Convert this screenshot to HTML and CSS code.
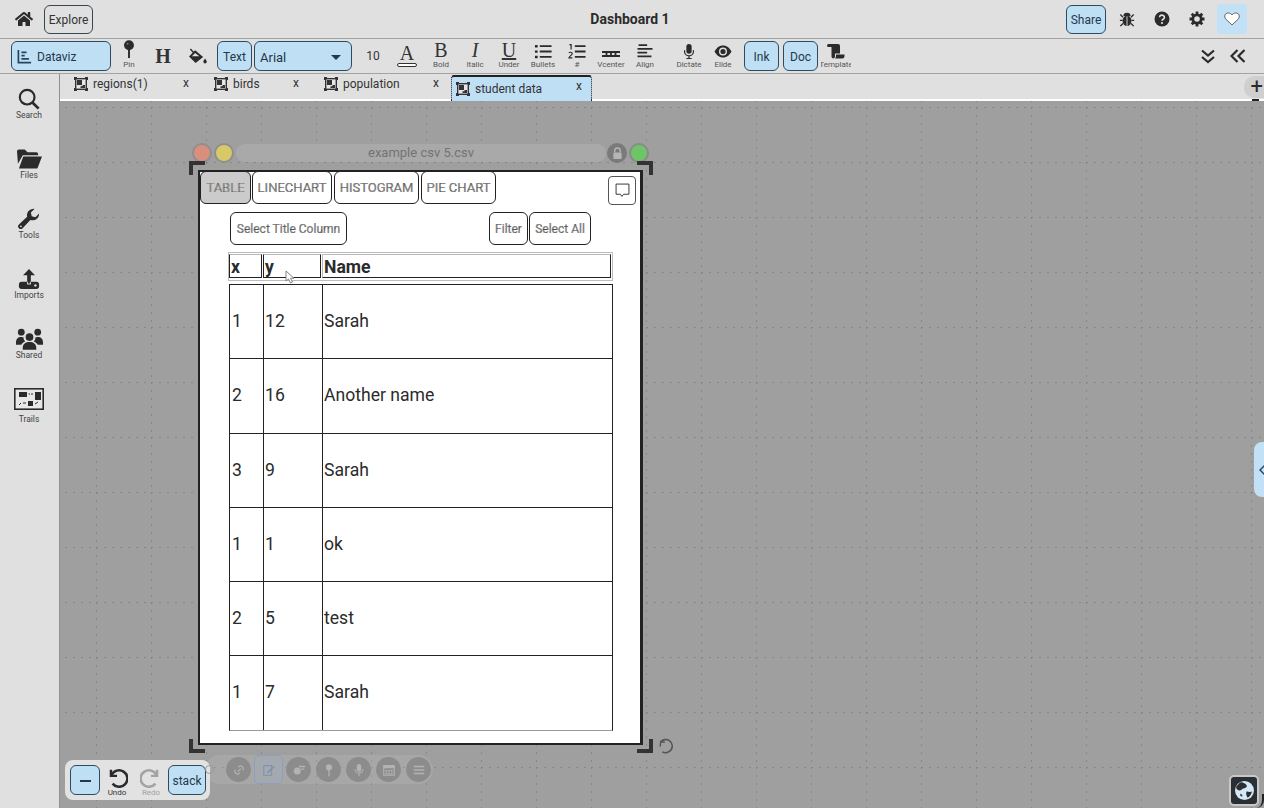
FILE: index.html
```html
<!DOCTYPE html>
<html lang="en">
<head>
<meta charset="utf-8">
<title>Dashboard 1</title>
<link rel="stylesheet" href="styles.css">
</head>
<body>
<svg class="defs" width="0" height="0" aria-hidden="true">
  <defs>
    <symbol id="doc-icon" viewBox="0 0 14 14">
      <path d="M0 0h3v1h8V0h3v3h-1v8h1v3h-3v-1H3v1H0v-3h1V3H0z" fill="#333"/>
      <rect x="2.4" y="2.4" width="9.2" height="9.2" fill="#e6e6e6"/>
      <path d="M3 3h5v5H3zM8.500 8h2.500v3H6.500V9.200h2z" fill="#333"/>
    </symbol>
  </defs>
</svg>
<div class="app">
  <header class="topbar">
    <div class="top-left">
      <svg class="home" viewBox="0 0 576 512"><path d="M280.37 148.26L96 300.11V464a16 16 0 0 0 16 16l112.06-.29a16 16 0 0 0 15.92-16V368a16 16 0 0 1 16-16h64a16 16 0 0 1 16 16v95.64a16 16 0 0 0 16 16.05L464 480a16 16 0 0 0 16-16V300L295.67 148.26a12.19 12.19 0 0 0-15.3 0zM571.6 251.47L488 182.56V44.05a12 12 0 0 0-12-12h-56a12 12 0 0 0-12 12v72.61L318.47 43a48 48 0 0 0-61 0L4.34 251.47a12 12 0 0 0-1.6 16.9l25.5 31A12 12 0 0 0 45.15 301l235.22-193.74a12.19 12.19 0 0 1 15.3 0L530.9 301a12 12 0 0 0 16.9-1.6l25.5-31a12 12 0 0 0-1.7-16.93z" fill="#2b2b2b"/></svg>
      <button class="btn explore">Explore</button>
    </div>
    <div class="title">Dashboard 1</div>
    <div class="top-right">
      <button class="btn active share">Share</button>
      <svg class="top-icon" viewBox="0 0 18 18"><g fill="#2b2b2b"><ellipse cx="9" cy="11" rx="5" ry="6"/><path d="M5 5.500a4 3.500 0 0 1 8 0z"/></g><path d="M1.500 4l3 3M16.500 4l-3 3M1 10.500h3M17 10.500h-3M1.500 17l3-3M16.500 17l-3-3" stroke="#2b2b2b" stroke-width="1.500" fill="none"/><path d="M9 6v11" stroke="#e0e0e0" stroke-width="1"/></svg>
      <svg class="top-icon" viewBox="0 0 16 16"><circle cx="8" cy="8" r="7.500" fill="#2b2b2b"/><path d="M5.600 6.200a2.400 2.200 0 1 1 3.600 2c-.8.500-1.200.8-1.200 1.600" fill="none" stroke="#e0e0e0" stroke-width="1.700"/><circle cx="8" cy="12" r="1.100" fill="#e0e0e0"/></svg>
      <svg class="top-icon" viewBox="0 0 16 16"><circle cx="8" cy="8" r="4.200" fill="none" stroke="#2b2b2b" stroke-width="2.800"/><path d="M8 .5v3M8 12.500v3M.5 8h3M12.500 8h3M2.700 2.700l2.100 2.100M11.200 11.200l2.100 2.100M13.300 2.700l-2.100 2.100M4.800 11.200l-2.100 2.100" stroke="#2b2b2b" stroke-width="2.800"/></svg>
      <div class="heart-box"><svg class="heart" viewBox="0 0 16 14"><path d="M8 13L2 7.200C-.6 4.500 1 1 4.200 1 6 1 7.300 2 8 3c.7-1 2-2 3.800-2C15 1 16.600 4.500 14 7.200z" fill="#fff" stroke="#2b2b2b" stroke-width=".7"/></svg></div>
    </div>
  </header>

  <div class="toolbar">
    <button class="btn active dataviz">
      <svg class="dv-icon" viewBox="0 0 16 16"><path d="M1.500 1v13.500H15M4.700 3.500h5.500M4.700 7h3.500M4.700 10.500h8" fill="none" stroke="#24445f" stroke-width="1.800"/></svg>
      Dataviz
    </button>
    <div class="tool"><svg class="ti ti-pin" viewBox="0 0 12 20"><circle cx="6" cy="5.500" r="5.200" fill="#2b2b2b"/><circle cx="4.500" cy="4" r="1" fill="#777"/><rect x="5" y="10" width="2" height="9" fill="#2b2b2b"/></svg><span class="tl">Pin</span></div>
    <div class="tool tool-plain"><span class="h-glyph">H</span></div>
    <div class="tool tool-plain"><svg class="ti-bucket" viewBox="0 0 20 18"><path d="M2.500 1l3.500 4" stroke="#2b2b2b" stroke-width="1.500" fill="none"/><path d="M7.500 2.500L1 9l7 7 8-6.500zM7.500 5.200L4 8.800h8z" fill="#2b2b2b" fill-rule="evenodd"/><path d="M18 11c1 1.500 1.800 2.400 1.800 3.500a1.800 1.800 0 0 1-3.600 0c0-1.100.8-2 1.800-3.500z" fill="#2b2b2b"/></svg></div>
    <button class="btn active text-btn">Text</button>
    <div class="select"><span>Arial</span><i class="caret"></i></div>
    <div class="tool tool-plain size">10</div>
    <div class="tool tool-plain"><span class="a-glyph">A</span><i class="a-bar"></i></div>
    <div class="tool"><span class="glyph g-b">B</span><span class="tl">Bold</span></div>
    <div class="tool"><span class="glyph g-i">I</span><span class="tl">Italic</span></div>
    <div class="tool"><span class="glyph g-u">U</span><span class="tl">Under</span></div>
    <div class="tool"><svg class="ti" viewBox="0 0 16 14"><path d="M5 2h11M5 7h11M5 12h11" stroke="#2b2b2b" stroke-width="1.800"/><path d="M.5 1h2.500v2.200H.5zM.5 6h2.500v2.200H.5zM.5 11h2.500v2.200H.5z" fill="#2b2b2b"/></svg><span class="tl">Bullets</span></div>
    <div class="tool"><svg class="ti" viewBox="0 0 16 14"><path d="M6 2h10M6 7h10M6 12h10" stroke="#2b2b2b" stroke-width="1.800"/><path d="M1 .8l1.500-.6v5M.5 8.500c.6-1.200 3-1 3 .5 0 1-2.500 2.200-3 4h3.200" fill="none" stroke="#2b2b2b" stroke-width="1.100"/></svg><span class="tl">#</span></div>
    <div class="tool"><svg class="ti" viewBox="0 0 20 14"><path d="M0 6.500h20v2.200H0zM0 11h20v2.200H0z" fill="#2b2b2b"/><path d="M4 8h2v4H4zM9 8h2v4H9zM14 8h2v4h-2z" fill="#2b2b2b"/></svg><span class="tl">Vcenter</span></div>
    <div class="tool"><svg class="ti" viewBox="0 0 16 14"><path d="M2 1h8M1 4.500h14M1 8h9M1 11.500h13" stroke="#2b2b2b" stroke-width="1.500"/></svg><span class="tl">Align</span></div>
    <div class="tool tool-gap"><svg class="ti" viewBox="0 0 12 17"><rect x="3" y="0" width="6" height="11" rx="3" fill="#2b2b2b"/><path d="M1 7v1.500a5 5 0 0 0 10 0V7M6 13.500V16.500M3 16.500h6" fill="none" stroke="#2b2b2b" stroke-width="1.400"/></svg><span class="tl">Dictate</span></div>
    <div class="tool"><svg class="ti" viewBox="0 0 18 13"><path d="M.5 6.500C3 2 6 .5 9 .5s6 1.500 8.500 6c-2.500 4.500-5.500 6-8.500 6s-6-1.500-8.500-6z" fill="#2b2b2b"/><circle cx="9" cy="6.500" r="4" fill="#e0e0e0"/><circle cx="9" cy="6.500" r="2.600" fill="#2b2b2b"/></svg><span class="tl">Elide</span></div>
    <button class="btn active ink">Ink</button>
    <button class="btn active doc">Doc</button>
    <div class="tool tool-clip"><svg class="ti" viewBox="0 0 18 15"><path d="M1.500 0H11a2 2 0 0 1 2 2v7.500H8v3a2 2 0 0 1-2 2 2 2 0 0 1-1.500-2V3H1.500A1.500 1.500 0 0 1 1.500 0z" fill="#2b2b2b"/><path d="M9 10.500h8.500v1.500a2.500 2.500 0 0 1-2.500 2.500H8a3.500 3.500 0 0 0 1-2.500z" fill="#2b2b2b"/></svg><span class="tl">Template</span></div>
    <div class="toolbar-end">
      <svg class="chev" viewBox="0 0 16 16"><path d="M2 2.500l6 5 6-5M2 9l6 5 6-5" fill="none" stroke="#2b2b2b" stroke-width="2.200"/></svg>
      <svg class="chev" viewBox="0 0 16 16"><path d="M7.500 2l-6 6 6 6M14.500 2l-6 6 6 6" fill="none" stroke="#2b2b2b" stroke-width="2.200"/></svg>
    </div>
  </div>

  <div class="main">
    <nav class="sidebar">
      <div class="side-item"><svg class="si" viewBox="0 0 24 24"><circle cx="10" cy="10" r="8" fill="none" stroke="#2b2b2b" stroke-width="2.400"/><path d="M15.500 15.500L22.500 22.500" stroke="#2b2b2b" stroke-width="3"/></svg><span>Search</span></div>
      <div class="side-item"><svg class="si si-files" viewBox="0 0 26 20"><path d="M0 2a2 2 0 0 1 2-2h6l3 3h9a2 2 0 0 1 2 2v1H6L1 15z" fill="#2b2b2b"/><path d="M6.500 7.500H26l-4.500 11.500a1.500 1.500 0 0 1-1.500 1H2z" fill="#2b2b2b"/></svg><span>Files</span></div>
      <div class="side-item"><svg class="si" viewBox="0 0 24 24"><path d="M23 6.500a7 7 0 0 1-9.500 6.500L5 22a2.800 2.800 0 0 1-4-4l9-8.500A7 7 0 0 1 18 1l-4 4 1 4 4 1 4-4z" fill="#2b2b2b"/><circle cx="3.200" cy="20" r="1" fill="#e0e0e0"/></svg><span>Tools</span></div>
      <div class="side-item"><svg class="si" viewBox="0 0 24 24"><path d="M12 1l6.500 7H14v9h-4V8H5.500z" fill="#2b2b2b"/><rect x="1" y="15" width="22" height="8" rx="3" fill="#2b2b2b"/><path d="M10 15h4v3h-4z" fill="#e0e0e0"/><path d="M11 14h2v3h-2z" fill="#2b2b2b"/><circle cx="19" cy="19" r="1.300" fill="#e0e0e0"/></svg><span>Imports</span></div>
      <div class="side-item"><svg class="si si-wide" viewBox="0 0 30 22"><g fill="#2b2b2b"><circle cx="6.500" cy="4" r="3.500"/><circle cx="23.500" cy="4" r="3.500"/><circle cx="15" cy="9" r="4"/><path d="M1 15c0-4 2-6 5.500-6 1 0 2 .2 2.500.5-.5 1.500.5 3 1.500 4C8 14.500 7 16 6.500 17H1zM29 15c0-4-2-6-5.500-6-1 0-2 .2-2.500.5.500 1.500-.5 3-1.500 4 2.500 1 3.500 2.500 4 3.500H29zM8 20c0-4 3-6 7-6s7 2 7 6v2H8z"/></g></svg><span>Shared</span></div>
      <div class="side-item side-trails"><svg class="trails" viewBox="0 0 30 22"><rect x=".8" y=".8" width="28.400" height="20.400" fill="#e8e8e8" stroke="#2b2b2b" stroke-width="1.600"/><path d="M5 4h8v5H5zM21 4h6v8h-6zM14 13h5v5h-5z" fill="#2b2b2b"/><path d="M14.500 6h1.500M17 6h2M5 17l2-2M9 15h3M21 16l3-2" stroke="#2b2b2b" stroke-width="1" fill="none"/></svg><span>Trails</span></div>
    </nav>

    <div class="workspace">
      <div class="tabs">
        <div class="tab t1"><svg class="tab-icon"><use href="#doc-icon"/></svg><span class="tab-name">regions(1)</span><span class="tab-x">x</span></div>
        <div class="tab t2"><svg class="tab-icon"><use href="#doc-icon"/></svg><span class="tab-name">birds</span><span class="tab-x">x</span></div>
        <div class="tab t3"><svg class="tab-icon"><use href="#doc-icon"/></svg><span class="tab-name">population</span><span class="tab-x">x</span></div>
        <div class="tab tab-active"><svg class="tab-icon"><use href="#doc-icon"/></svg><span class="tab-name">student data</span><span class="tab-x">x</span></div>
        <div class="plus">+</div>
      </div>
      <div class="tab-rule"></div>

      <div class="canvas">
        <svg class="grid" width="100%" height="100%">
          <defs>
            <pattern id="grid-cell" x="36" y="6" width="55" height="55" patternUnits="userSpaceOnUse">
              <path d="M0 0V55M0 0H55" stroke="#7f7f7f" stroke-width="1.500" stroke-dasharray="2 6"/>
            </pattern>
          </defs>
          <rect width="100%" height="100%" fill="url(#grid-cell)"/>
        </svg>

        <div class="light red"></div>
        <div class="light yellow"></div>
        <div class="title-pill">example csv 5.csv</div>
        <div class="light lock"><svg viewBox="0 0 12 14"><path d="M3 6V4a3 3 0 0 1 6 0v2" fill="none" stroke="#b5b5b5" stroke-width="1.500"/><rect x="1.500" y="6" width="9" height="7" rx="1" fill="#b5b5b5"/></svg></div>
        <div class="light green"></div>
        <i class="corner c-tl"></i><i class="corner c-tr"></i><i class="corner c-bl"></i><i class="corner c-br"></i>
        <svg class="rotate" viewBox="0 0 16 16"><path d="M3.500 3.500L3 8M3 3.200l4.300.8" fill="none" stroke="#555" stroke-width="1.400"/><path d="M3.400 3.700A6.200 6.200 0 1 1 5 13" fill="none" stroke="#555" stroke-width="1.500"/></svg>

        <section class="window">
          <div class="win-tabs">
            <button class="wbtn wtab wtab-on">TABLE</button>
            <button class="wbtn wtab w-line">LINECHART</button>
            <button class="wbtn wtab w-hist">HISTOGRAM</button>
            <button class="wbtn wtab w-pie">PIE CHART</button>
            <button class="comment"><svg viewBox="0 0 14 14"><path d="M1 1h12v9.500H8L6.500 12.500 5 10.500H1z" fill="#fff" stroke="#333" stroke-width=".9"/></svg></button>
          </div>
          <div class="win-actions">
            <button class="wbtn act select-title">Select Title Column</button>
            <div class="act-right">
              <button class="wbtn act filter">Filter</button>
              <button class="wbtn act select-all">Select All</button>
            </div>
          </div>
          <div class="thead">
            <div class="th">x</div><div class="th">y</div><div class="th">Name</div>
          </div>
          <div class="tbody">
            <div class="row"><div class="td">1</div><div class="td">12</div><div class="td">Sarah</div></div>
            <div class="row"><div class="td">2</div><div class="td">16</div><div class="td">Another name</div></div>
            <div class="row"><div class="td">3</div><div class="td">9</div><div class="td">Sarah</div></div>
            <div class="row"><div class="td">1</div><div class="td">1</div><div class="td">ok</div></div>
            <div class="row"><div class="td">2</div><div class="td">5</div><div class="td">test</div></div>
            <div class="row"><div class="td">1</div><div class="td">7</div><div class="td">Sarah</div></div>
          </div>
          <svg class="cursor" viewBox="0 0 10 14"><path d="M1 1v10l2.500-2 2 4 2-1-2-3.800H9z" fill="#fff" stroke="#777" stroke-width=".9"/></svg>
        </section>

        <div class="ghost-bar">
          <span class="gc"><svg viewBox="0 0 16 16"><path d="M6.500 10L10 6.500M4 7.500a3 3 0 0 0 .5 4.500 3 3 0 0 0 4-.5l.5-.5M12 8.500a3 3 0 0 0-.5-4.500 3 3 0 0 0-4 .5l-.5.5" fill="none" stroke="#b3b3b3" stroke-width="1.400"/></svg></span>
          <span class="gb"><svg viewBox="0 0 16 16"><path d="M2 3h9v11H2z" fill="none" stroke="#7e93ad" stroke-width="1.200"/><path d="M6 10l7-7 1.500 1.500-7 7H6z" fill="#7e93ad"/></svg></span>
          <span class="gc"><svg viewBox="0 0 16 16"><circle cx="6" cy="9" r="4" fill="#b3b3b3"/><path d="M8 4h7M10 7h4" stroke="#b3b3b3" stroke-width="1.500"/></svg></span>
          <span class="gc"><svg viewBox="0 0 16 16"><circle cx="8" cy="5" r="3.500" fill="#b3b3b3"/><path d="M8 8v7" stroke="#b3b3b3" stroke-width="1.500"/></svg></span>
          <span class="gc"><svg viewBox="0 0 16 16"><rect x="5.500" y="1" width="5" height="9" rx="2.500" fill="#b3b3b3"/><path d="M3.500 7a4.500 4.500 0 0 0 9 0M8 12v3" fill="none" stroke="#b3b3b3" stroke-width="1.300"/></svg></span>
          <span class="gc"><svg viewBox="0 0 16 16"><path d="M2 3h12v11H2z" fill="none" stroke="#b3b3b3" stroke-width="1.300"/><path d="M2 3h12v3H2zM4 8h2v2H4zM7 8h2v2H7zM10 8h2v2h-2zM4 11h2v2H4zM7 11h2v2H7zM10 11h2v2h-2z" fill="#b3b3b3"/></svg></span>
          <span class="gc"><svg viewBox="0 0 16 16"><path d="M2 4h12M2 8h12M2 12h12" stroke="#b3b3b3" stroke-width="1.700"/></svg></span>
        </div>

        <div class="stack-panel">
          <button class="btn active minus"><i></i></button>
          <div class="hist"><svg viewBox="0 0 20 20"><path d="M4.500 3.500V9H10" fill="none" stroke="#2b2b2b" stroke-width="2.200"/><path d="M5 8.500A7.500 7.500 0 1 1 6 16" fill="none" stroke="#2b2b2b" stroke-width="2.300"/></svg><span>Undo</span></div>
          <div class="hist hist-off"><svg viewBox="0 0 20 20"><path d="M15.500 3.500V9H10" fill="none" stroke="#a3a3a3" stroke-width="2.200"/><path d="M15 8.500A7.500 7.500 0 1 0 14 16" fill="none" stroke="#a3a3a3" stroke-width="2.300"/></svg><span>Redo</span></div>
          <button class="btn active stack">stack</button>
        </div>
        <i class="ghost-ring"></i>

        <div class="side-handle"><svg viewBox="0 0 8 12"><path d="M7 1L2 6l5 5" fill="none" stroke="#24445f" stroke-width="1.400"/></svg></div>
        <div class="globe"><svg viewBox="0 0 20 20"><circle cx="10" cy="10" r="9" fill="#d5e8f5"/><path d="M7 2c2 1 4 1 5 3s-2 3-3 3-2 2-4 2-3-2-3-3 3-4 5-5zM12 11c2 0 3 1 5 0 0 2-2 5-4 6-1-2-2-4-1-6zM6 13c1 0 2 1 2 2s-1 1-2 0z" fill="#2a2f33"/></svg></div>
      </div>
    </div>
  </div>
</div>
</body>
</html>
```
FILE: styles.css
```css
* { box-sizing: border-box; }
html, body { margin: 0; height: 100%; overflow: hidden; }
body { font-family: Roboto, "Liberation Sans", sans-serif; color: #2b2b2b; background: #e0e0e0; }
.defs { position: absolute; }
button { font-family: inherit; padding: 0; margin: 0; background: none; }

.app { width: 1264px; height: 808px; display: flex; flex-direction: column; }

.btn { border: 1px solid #3a4650; border-radius: 6px; font-size: 12px; color: #333; display: flex; align-items: center; justify-content: center; padding-top: 1px; }
.btn.active { background: #bfdff5; color: #24384a; border-color: #2e4a60; }

.topbar { height: 39px; flex: none; background: #e0e0e0; border-bottom: 1px solid #a3a3a3; display: flex; align-items: center; position: relative; padding: 0 17px 0 15px; justify-content: space-between; }
.top-left { display: flex; align-items: center; gap: 11px; }
.home { width: 18px; height: 16px; }
.explore { width: 49px; height: 29px; margin-top: 1px; }
.title { position: absolute; left: 0; right: 0; text-align: center; font-weight: 700; font-size: 14px; color: #2b2b2b; padding-right: 4px; pointer-events: none; }
.top-right { display: flex; align-items: center; }
.share { width: 40px; height: 29px; margin-top: 1px; margin-right: 13px; }
.top-icon { width: 16px; height: 16px; margin-right: 19px; }
.top-icon:nth-of-type(3) { margin-right: 12px; }
.heart-box { width: 30px; height: 30px; background: #c3e1f6; border-radius: 4px; display: flex; align-items: center; justify-content: center; }
.heart { width: 16px; height: 14px; }

.toolbar { height: 35px; flex: none; background: #e0e0e0; border-bottom: 1px solid #a3a3a3; display: flex; align-items: center; padding-left: 11px; }
.dataviz { width: 100px; height: 30px; margin-right: 1px; justify-content: flex-start; padding-left: 5px; gap: 5px; }
.dv-icon { width: 15px; height: 15px; }
.tool { width: 34px; height: 33px; flex: none; display: flex; flex-direction: column; align-items: center; justify-content: flex-end; padding-bottom: 4px; position: relative; }
.tool-plain { justify-content: center; padding-bottom: 0; }
.tool-gap { margin-left: 10px; }
.tool-clip { width: 30px; margin-left: 3px; overflow: hidden; }
.ti { height: 15px; width: 18px; margin-bottom: 1px; flex: none; }
.ti-pin { height: 19px; }
.ti-bucket { width: 19px; height: 17px; }
.tl { font-size: 8px; line-height: 9px; color: #555; white-space: nowrap; flex: none; }
.h-glyph { font-family: "Liberation Serif", serif; font-weight: 700; font-size: 20px; line-height: 20px; color: #333; }
.text-btn { width: 35px; height: 30px; margin-left: 3px; }
.select { width: 98px; height: 30px; margin-left: 2px; border: 1px solid #2e4a60; border-radius: 6px; background: #bfdff5; display: flex; align-items: center; justify-content: space-between; padding: 2px 10px 0 5px; font-size: 13px; color: #24384a; }
.caret { width: 0; height: 0; border-left: 5px solid transparent; border-right: 5px solid transparent; border-top: 5px solid #24384a; }
.size { font-size: 12px; color: #333; margin-left: 4px; }
.a-glyph { font-family: "Liberation Serif", serif; font-size: 20px; line-height: 17px; color: #333; }
.a-bar { width: 20px; height: 4px; border: 1px solid #333; border-radius: 2px; background: #fff; margin-top: 1px; }
.glyph { font-family: "Liberation Serif", serif; font-size: 20px; line-height: 17px; color: #333; margin-bottom: 1px; }
.g-i { font-style: italic; }
.g-u { text-decoration: underline; }
.ink { width: 35px; height: 30px; margin-left: 4px; }
.doc { width: 35px; height: 30px; margin-left: 4px; }
.toolbar-end { margin-left: auto; display: flex; align-items: center; gap: 14px; padding-right: 18px; }
.chev { width: 16px; height: 16px; }

.main { flex: 1; display: flex; min-height: 0; }
.sidebar { width: 60px; flex: none; background: #e0e0e0; border-right: 1px solid #8f8f8f; display: flex; flex-direction: column; padding: 10px 1px 0 0; }
.side-item { height: 60px; display: flex; flex-direction: column; align-items: center; padding-top: 4px; color: #444; font-size: 8.5px; line-height: 10px; }
.si { width: 22px; height: 22px; }
.si-files { width: 25px; }
.si-wide { width: 29px; }
.side-trails { gap: 4px; }
.trails { width: 30px; height: 22px; }

.workspace { flex: 1; display: flex; flex-direction: column; min-width: 0; }
.tabs { height: 25px; flex: none; display: flex; position: relative; padding-left: 14px; background: #e0e0e0; }
.tab { display: flex; align-items: center; height: 20px; font-size: 12px; color: #333; position: relative; flex: none; }
.t1 { width: 140px; }
.t2 { width: 110px; }
.t3 { width: 127px; }
.tab-icon { width: 14px; height: 14px; margin-right: 5px; }
.tab-x { position: absolute; font-size: 12px; top: 2px; }
.t1 .tab-x { left: 109px; }
.t2 .tab-x { left: 79px; }
.t3 .tab-x { left: 109px; }
.tab-active { width: 141px; height: 26px; margin-top: 1px; background: #bfdff5; border-top: 2px solid #222; border-left: 1px dotted #222; border-right: 1px dotted #222; border-radius: 3px 3px 0 0; padding-left: 4px; }
.tab-active .tab-x { left: 124px; top: 2px; }
.tab-active .tab-icon { margin-right: 5px; }
.plus { position: absolute; right: 0; top: 2px; width: 20px; height: 22px; background: #cfcfcf; border-radius: 10px 0 0 10px; font-size: 22px; font-weight: 400; line-height: 22px; text-align: right; padding-right: 1px; color: #2b2b2b; }
.plus::after { content: ""; position: absolute; right: 5px; top: 23px; width: 7px; height: 2px; background: #222; }
.tab-rule { height: 2px; flex: none; background: #fff; }

.canvas { flex: 1; position: relative; background: #9f9f9f; overflow: hidden; }
.canvas::after { content: ""; position: absolute; right: 0; bottom: 0; width: 6px; height: 14px; border-right: 2px solid #222; border-bottom-right-radius: 8px; }
.grid { position: absolute; left: 0; top: 0; }

.light { position: absolute; width: 20px; height: 20px; border-radius: 50%; top: 42px; border: 2px solid #8f8f8f; }
.red { left: 132px; background: #d98f7e; }
.yellow { left: 154px; background: #d9c868; }
.lock { left: 547px; background: #7a7a7a; border: none; display: flex; align-items: center; justify-content: center; }
.lock svg { width: 11px; height: 13px; }
.green { left: 569px; background: #6dc568; border-color: #8a8a8a; }
.title-pill { position: absolute; left: 176px; top: 43px; width: 370px; height: 18px; background: #a9a9a9; border-radius: 9px; font-size: 13px; line-height: 18px; text-align: center; color: #737373; }

.corner { position: absolute; width: 16px; height: 14px; border: 0 solid #333; }
.c-tl { left: 129px; top: 60px; border-left-width: 4px; border-top-width: 4px; }
.c-tr { left: 577px; top: 60px; border-right-width: 4px; border-top-width: 4px; }
.c-bl { left: 129px; top: 638px; border-left-width: 4px; border-bottom-width: 4px; }
.c-br { left: 577px; top: 638px; border-right-width: 4px; border-bottom-width: 4px; }
.rotate { position: absolute; left: 597px; top: 637px; width: 17px; height: 17px; }

.window { position: absolute; left: 138px; top: 69px; width: 445px; height: 575px; background: #fff; border: 2px solid #222; border-right-width: 3px; }
.win-tabs { display: flex; height: 33px; position: relative; margin-top: -1px; }
.wbtn { background: #fff; border: 1px solid #222; border-radius: 6px; font-size: 12px; color: #8a8a8a; -webkit-text-stroke: .2px #222; flex: none; }
.wtab { height: 33px; font-size: 13px; }
.wtab-on { width: 51px; background: #cbcbcb; color: #9a9a9a; }
.w-line { width: 80px; margin-left: 1px; }
.w-hist { width: 85px; margin-left: 2px; }
.w-pie { width: 75px; margin-left: 2px; }
.comment { position: absolute; left: 408px; top: 5px; width: 28px; height: 29px; border: 1px solid #555; border-radius: 4px; background: #fff; display: flex; align-items: center; justify-content: center; }
.comment svg { width: 15px; height: 15px; }
.win-actions { display: flex; justify-content: space-between; margin: 8px 0 0 30px; width: 361px; }
.act { height: 33px; }
.select-title { width: 117px; }
.act-right { display: flex; gap: 1px; }
.filter { width: 39px; }
.select-all { width: 62px; }
.thead { display: grid; grid-template-columns: 34px 59px 290px; width: 385px; height: 29px; margin: 7px 0 3px 28px; border: 1px solid #bdbdbd; padding-top: 1px; }
.th { font-size: 17.6px; font-weight: 700; line-height: 24px; height: 24px; border: 1px solid #222; border-top-color: #bbb; padding-left: 1px; margin-right: 1px; color: #2b2b2b; }
.thead .th:last-child { border-left-color: #bbb; }
.tbody { width: 384px; height: 447px; margin-left: 29px; overflow: hidden; border-left: 1px solid #222; border-right: 1px solid #222; border-top: 1px solid #222; border-bottom: 1px solid #999; }
.row { display: grid; grid-template-columns: 34px 59px 289px; height: 74.3px; border-bottom: 1px solid #222; }
.td { font-size: 17.6px; line-height: 72px; padding-left: 1px; color: #2b2b2b; border-right: 1px solid #222; }
.row .td:last-child { border-right: none; }
.td:first-child { padding-left: 2px; }
.cursor { position: absolute; left: 85px; top: 98px; width: 10px; height: 14px; }

.ghost-bar { position: absolute; left: 145px; top: 654px; height: 29px; width: 228px; background: rgba(190,190,190,.25); border-radius: 15px; display: flex; align-items: center; padding-left: 21px; gap: 5px; }
.gc { width: 25px; height: 25px; border-radius: 50%; background: #8c8c8c; display: flex; align-items: center; justify-content: center; flex: none; }
.gc svg, .gb svg { width: 14px; height: 14px; }
.gb { width: 29px; height: 29px; border: 1px solid #8aa0bc; border-radius: 5px; background: #a4a9b0; display: flex; align-items: center; justify-content: center; flex: none; margin: 0 -2px; }

.stack-panel { position: absolute; left: 5px; top: 659px; width: 145px; height: 40px; background: #e2e2e2; border-radius: 8px; display: flex; align-items: center; padding-left: 5px; }
.minus { width: 30px; height: 30px; }
.minus i { width: 11px; height: 2px; background: #24384a; }
.hist { width: 34px; display: flex; flex-direction: column; align-items: center; font-size: 8px; line-height: 9px; color: #333; padding-top: 3px; }
.hist svg { width: 22px; height: 22px; }
.hist-off { color: #a3a3a3; }
.stack { width: 38px; height: 30px; font-size: 12px; }
.ghost-ring { position: absolute; left: 145px; top: 664px; width: 9px; height: 9px; border: 1.500px solid #999; border-radius: 50%; }

.side-handle { position: absolute; right: 0; top: 341px; width: 10px; height: 55px; background: #c3e1f6; border-radius: 8px 0 0 8px; display: flex; align-items: center; justify-content: flex-end; overflow: hidden; }
.side-handle svg { width: 8px; height: 12px; flex: none; margin-right: -2px; }
.globe { position: absolute; left: 1169px; top: 674px; width: 30px; height: 31px; background: #2a2f33; border: 2px solid #c8c8c8; border-radius: 5px; display: flex; align-items: center; justify-content: center; }
.globe svg { width: 21px; height: 21px; }
```
